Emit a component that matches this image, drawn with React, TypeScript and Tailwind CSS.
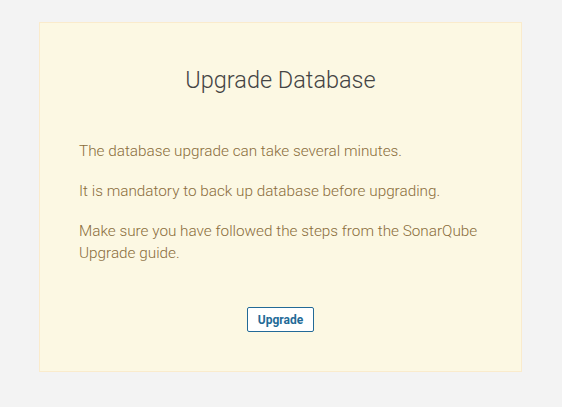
export default function App() {
  return (
    <div className="min-h-[407px] bg-[#f3f3f3] pt-[22px] font-['Roboto','Liberation_Sans',sans-serif]">
      <div className="ml-[39px] w-[483px] h-[350px] border border-[#faebcc] bg-[#fcf8e3] px-[39px] pt-[43px]">
        <h1 className="text-center text-[23.5px] font-light leading-[28px] text-[#444]">Upgrade Database</h1>
        <div className="mt-[46px] text-[15.3px] font-light leading-[22px] text-[#8a6d3b]">
          <p>The database upgrade can take several minutes.</p>
          <p className="mt-[18px]">It is mandatory to back up database before upgrading.</p>
          <p className="mt-[18px]">
            Make sure you have followed the steps from the SonarQube Upgrade guide.
          </p>
        </div>
        <div className="mt-[43px] flex justify-center">
          <button className="h-[25px] rounded-[2px] border border-[#236a97] bg-white px-[10px] text-[12px] font-bold text-[#236a97]">
            Upgrade
          </button>
        </div>
      </div>
    </div>
  );
}
